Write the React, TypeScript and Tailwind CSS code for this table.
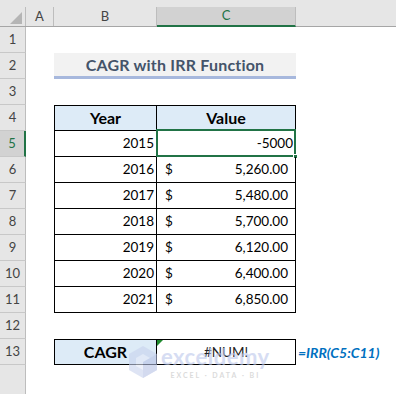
const FONT = { fontFamily: 'Lato, "Open Sans", sans-serif' }

const DATA: { year: number; value: string; dollar: boolean }[] = [
  { year: 2015, value: '-5000', dollar: false },
  { year: 2016, value: '5,260.00', dollar: true },
  { year: 2017, value: '5,480.00', dollar: true },
  { year: 2018, value: '5,700.00', dollar: true },
  { year: 2019, value: '6,120.00', dollar: true },
  { year: 2020, value: '6,400.00', dollar: true },
  { year: 2021, value: '6,850.00', dollar: true },
]

function RowHead({ n, active }: { n?: number; active?: boolean }) {
  return (
    <div
      className={`w-[26px] shrink-0 flex items-center justify-center text-[13px] border-r ${
        active
          ? 'bg-[#d2d2d2] text-[#217346] border-r-2 border-r-[#217346]'
          : 'bg-[#e6e6e6] text-[#444] border-r-[#bdbdbd]'
      } border-b border-b-[#c8c8c8]`}
    >
      {n}
    </div>
  )
}

function Row({ n, active, children }: { n: number; active?: boolean; children?: React.ReactNode }) {
  return (
    <div className="flex h-[26px]">
      <RowHead n={n} active={active} />
      <div className="w-[28px] shrink-0" />
      {children}
    </div>
  )
}

function Watermark() {
  return (
    <div className="absolute left-[127px] top-[345px] flex items-start gap-[2px] opacity-60 pointer-events-none">
      <svg width="32" height="34" viewBox="0 0 32 34">
        <path d="M16 1 L30 9 L30 25 L16 33 L2 25 L2 9 Z" fill="#c9d3ee" />
        <path d="M16 9 L23 13 L23 21 L16 25 L9 21 L9 13 Z" fill="#e4e9f7" />
        <path d="M16 17 L30 9 L30 25 L16 33 Z" fill="#b7c3e6" />
      </svg>
      <div className="flex flex-col items-center">
        <span className="text-[22px] font-bold leading-[24px] text-[#bcc8ec] tracking-[0.5px]">exceldemy</span>
        <span className="text-[7px] font-bold tracking-[2px] text-[#c4c4c4] leading-[10px] mt-[1px]">
          EXCEL · DATA · BI
        </span>
      </div>
    </div>
  )
}

export default function App() {
  return (
    <div className="relative w-[396px] h-[394px] overflow-hidden bg-white" style={FONT}>
      {/* column headers */}
      <div className="flex h-[27px] bg-[#e6e6e6] border-b border-[#a6a6a6]">
        <div className="w-[26px] shrink-0 relative border-r border-[#bdbdbd] mt-[7px]">
          <svg className="absolute left-[10px] top-[5px]" width="12" height="12" viewBox="0 0 12 12">
            <path d="M12 0 L12 12 L0 12 Z" fill="#b5b5b5" />
          </svg>
        </div>
        <div className="w-[28px] shrink-0 mt-[7px] border-r border-[#bdbdbd] flex items-center justify-center text-[13px] text-[#444]">
          A
        </div>
        <div className="w-[103px] shrink-0 mt-[7px] border-r border-[#bdbdbd] flex items-center justify-center text-[13px] text-[#444]">
          B
        </div>
        <div className="w-[139px] shrink-0 mt-[7px] bg-[#d2d2d2] border-r border-[#bdbdbd] border-b-2 border-b-[#217346] -mb-[1px] flex items-center justify-center text-[13px] text-[#217346]">
          C
        </div>
        <div className="flex-1" />
      </div>

      <Row n={1} />
      <Row n={2}>
        <div className="w-[242px] shrink-0 bg-[#f2f2f2] border-b-[3px] border-[#a7b8dd] flex items-center justify-center text-[16px] font-bold text-[#44546a] tracking-[0.2px]">
          CAGR with IRR Function
        </div>
      </Row>
      <Row n={3} />
      <Row n={4}>
        <div className="w-[103px] shrink-0 bg-[#ddebf7] border border-black flex items-center justify-center text-[16px] font-bold text-black">
          Year
        </div>
        <div className="w-[139px] shrink-0 bg-[#ddebf7] border-y border-r border-black flex items-center justify-center text-[16px] font-bold text-black">
          Value
        </div>
      </Row>
      {DATA.map((d, i) => (
        <Row key={d.year} n={5 + i} active={i === 0}>
          <div className="w-[103px] shrink-0 border-x border-b border-black flex items-center justify-end pr-[2px] text-[13.5px] text-black">
            {d.year}
          </div>
          <div className="relative w-[139px] shrink-0 border-r border-b border-black flex items-center justify-between text-[13.5px] text-black">
            {d.dollar ? (
              <>
                <span className="pl-[8px]">$</span>
                <span className="pr-[7px]">{d.value}</span>
              </>
            ) : (
              <>
                <span />
                <span className="pr-[2px]">{d.value}</span>
                <div className="absolute -left-[1px] -top-[2px] -right-[1px] -bottom-[1px] border-2 border-[#217346]" />
                <div className="absolute -right-[3px] -bottom-[3px] w-[5px] h-[5px] bg-[#217346] border border-white" />
              </>
            )}
          </div>
        </Row>
      ))}
      <Row n={12} />
      <Row n={13}>
        <div className="w-[103px] shrink-0 bg-[#ddebf7] border border-black flex items-center justify-center text-[16px] font-bold text-black">
          CAGR
        </div>
        <div className="relative w-[139px] shrink-0 border-y border-r border-black flex items-center justify-center text-[13.5px] text-[#222]">
          <svg className="absolute left-0 top-0" width="6" height="6" viewBox="0 0 6 6">
            <path d="M0 0 L6 0 L0 6 Z" fill="#1f8a2e" />
          </svg>
          #NUM!
        </div>
        <div className="pl-[2px] flex items-center text-[14px] font-bold italic text-[#0070c0]">=IRR(C5:C11)</div>
      </Row>
      <div className="flex h-[40px]">
        <div className="w-[26px] shrink-0 bg-[#e6e6e6] border-r border-[#bdbdbd]" />
      </div>
      <Watermark />
    </div>
  )
}
